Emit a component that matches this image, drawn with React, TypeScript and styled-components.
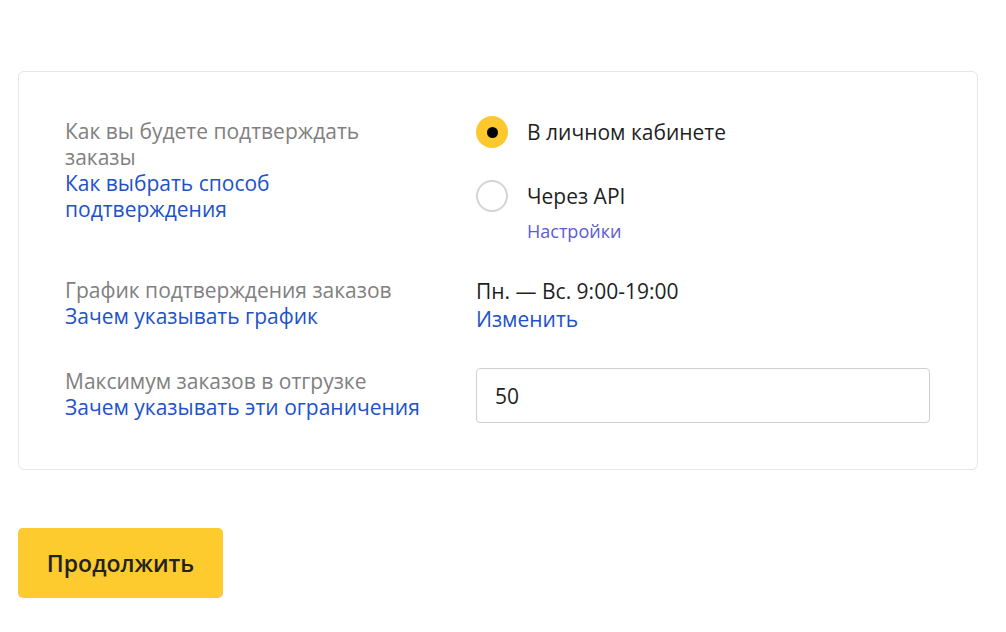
import React, { useState } from 'react';
import styled, { createGlobalStyle } from 'styled-components';

const GlobalStyle = createGlobalStyle`
  html, body {
    margin: 0;
    padding: 0;
    background: #fff;
    font-family: "Open Sans", "Liberation Sans", sans-serif;
    color: #1f1f1f;
  }
`;

const Page = styled.div`
  padding: 71px 0 0 18px;
`;

const Card = styled.div`
  width: 960px;
  box-sizing: border-box;
  border: 1px solid #e6e6e6;
  border-radius: 6px;
  padding: 46px 47px 46px 46px;
  display: grid;
  grid-template-columns: 411px 1fr;
  row-gap: 35px;
  align-items: start;
`;

const Label = styled.div`
  font-size: 21px;
  line-height: 26px;
  color: #808080;
  padding-right: 45px;
`;

const HelpLink = styled.a`
  display: block;
  font-size: 21px;
  line-height: 26px;
  color: #2151c8;
  text-decoration: none;
  padding-right: 45px;
  cursor: pointer;
`;

const Options = styled.div`
  display: flex;
  flex-direction: column;
  gap: 32px;
  margin-top: -2px;
`;

const Option = styled.label`
  display: flex;
  align-items: center;
  gap: 19px;
  height: 32px;
  font-size: 21px;
  color: #1f1f1f;
  cursor: pointer;
`;

const RadioCircle = styled.span<{ $checked: boolean }>`
  width: 32px;
  height: 32px;
  box-sizing: border-box;
  border-radius: 50%;
  flex-shrink: 0;
  display: flex;
  align-items: center;
  justify-content: center;
  background: ${(p) => (p.$checked ? '#fdc72e' : '#fff')};
  border: ${(p) => (p.$checked ? 'none' : '2px solid #d4d4d4')};

  &::after {
    content: '';
    display: ${(p) => (p.$checked ? 'block' : 'none')};
    width: 11px;
    height: 11px;
    border-radius: 50%;
    background: #000;
  }
`;

const OptionGroup = styled.div`
  display: flex;
  flex-direction: column;
`;

const SubLink = styled.a`
  margin: 8px 0 0 51px;
  font-size: 18px;
  line-height: 22px;
  color: #5b5bd6;
  text-decoration: none;
  cursor: pointer;
`;

const Value = styled.div`
  font-size: 21px;
  line-height: 28px;
  color: #1f1f1f;
`;

const ValueLink = styled.a`
  display: block;
  font-size: 21px;
  line-height: 28px;
  color: #2151c8;
  text-decoration: none;
  cursor: pointer;
`;

const Input = styled.input`
  width: 100%;
  height: 55px;
  box-sizing: border-box;
  border: 1px solid #cfcfcf;
  border-radius: 4px;
  padding: 0 18px;
  font-family: inherit;
  font-size: 21px;
  color: #1f1f1f;
  outline: none;
`;

const Button = styled.button`
  margin-top: 58px;
  width: 205px;
  height: 70px;
  border: none;
  border-radius: 5px;
  background: #fdcb2d;
  font-family: inherit;
  font-size: 23px;
  font-weight: 600;
  color: #222;
  cursor: pointer;
`;

function App() {
  const [mode, setMode] = useState('cabinet');
  const [max, setMax] = useState('50');

  return (
    <Page>
      <GlobalStyle />
      <Card>
        <div>
          <Label>Как вы будете подтверждать заказы</Label>
          <HelpLink>Как выбрать способ подтверждения</HelpLink>
        </div>
        <Options>
          <Option onClick={() => setMode('cabinet')}>
            <RadioCircle $checked={mode === 'cabinet'} />
            В личном кабинете
          </Option>
          <OptionGroup>
            <Option onClick={() => setMode('api')}>
              <RadioCircle $checked={mode === 'api'} />
              Через API
            </Option>
            <SubLink>Настройки</SubLink>
          </OptionGroup>
        </Options>

        <div>
          <Label>График подтверждения заказов</Label>
          <HelpLink>Зачем указывать график</HelpLink>
        </div>
        <div>
          <Value>Пн. — Вс. 9:00-19:00</Value>
          <ValueLink>Изменить</ValueLink>
        </div>

        <div>
          <Label>Максимум заказов в отгрузке</Label>
          <HelpLink>Зачем указывать эти ограничения</HelpLink>
        </div>
        <Input value={max} onChange={(e) => setMax(e.target.value)} />
      </Card>
      <Button>Продолжить</Button>
    </Page>
  );
}

export default App;
